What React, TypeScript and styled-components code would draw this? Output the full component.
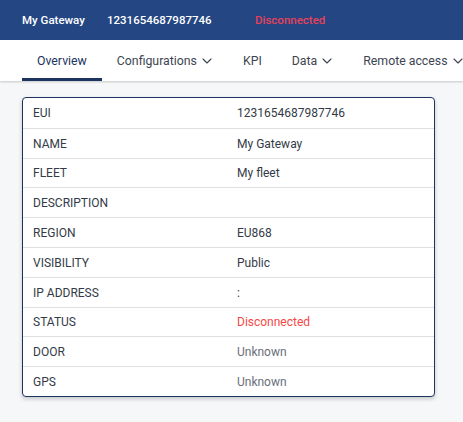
import React from 'react'
import styled, { createGlobalStyle } from 'styled-components'

const GlobalStyle = createGlobalStyle`
  body {
    margin: 0;
    background: #f6f7f9;
    font-family: Roboto, 'Noto Sans', sans-serif;
  }
`

const Header = styled.div`
  display: flex;
  align-items: center;
  height: 40px;
  padding: 0 22px;
  background: #244682;
  color: #ffffff;
  font-size: 11.5px;
  font-weight: 500;
`

const HeaderItem = styled.span<{ danger?: boolean; width?: number }>`
  color: ${({ danger }) => (danger ? '#e8405a' : '#ffffff')};
  width: ${({ width }) => (width ? `${width}px` : 'auto')};
  white-space: nowrap;
`

const TabBar = styled.div`
  display: flex;
  height: 41px;
  padding: 0 22px;
  background: #ffffff;
  box-shadow: 0 1px 2px rgba(0, 0, 0, 0.2);
  overflow: hidden;
`

const Tab = styled.div<{ active?: boolean }>`
  display: flex;
  align-items: center;
  gap: 4px;
  padding: 3px 15px 0;
  font-size: 12.3px;
  color: ${({ active }) => (active ? '#1d3461' : '#3d4451')};
  white-space: nowrap;
  border-bottom: 3px solid ${({ active }) => (active ? '#1d3461' : 'transparent')};
  box-sizing: border-box;
`

const Content = styled.div`
  padding: 16px 28px 25px 22px;
`

const Card = styled.div`
  background: #ffffff;
  border: 1px solid #1d3461;
  border-radius: 4px;
  box-shadow: 0 2px 4px rgba(0, 0, 0, 0.2);
  overflow: hidden;
`

const Row = styled.div`
  display: grid;
  grid-template-columns: 204px 1fr;
  align-items: center;
  height: 29.8px;
  box-sizing: border-box;
  padding: 1px 10px 0;
  font-size: 12px;
  color: #333b48;
  & + & {
    border-top: 1px solid #dfe0e3;
  }
`

const Value = styled.span<{ tone?: 'danger' | 'muted' }>`
  color: ${({ tone }) => (tone === 'danger' ? '#f44848' : tone === 'muted' ? '#6a707a' : '#333b48')};
`

const Chevron = () => (
  <svg width="12" height="12" viewBox="0 0 24 24" fill="none" stroke="currentColor" strokeWidth="2.2" strokeLinecap="round" strokeLinejoin="round">
    <polyline points="4 8 12 16 20 8" />
  </svg>
)

const rows: { label: string; value: string; tone?: 'danger' | 'muted' }[] = [
  { label: 'EUI', value: '1231654687987746' },
  { label: 'NAME', value: 'My Gateway' },
  { label: 'FLEET', value: 'My fleet' },
  { label: 'DESCRIPTION', value: '' },
  { label: 'REGION', value: 'EU868' },
  { label: 'VISIBILITY', value: 'Public' },
  { label: 'IP ADDRESS', value: ':' },
  { label: 'STATUS', value: 'Disconnected', tone: 'danger' },
  { label: 'DOOR', value: 'Unknown', tone: 'muted' },
  { label: 'GPS', value: 'Unknown', tone: 'muted' },
]

export default function App() {
  return (
    <>
      <GlobalStyle />
      <Header>
        <HeaderItem width={85}>My Gateway</HeaderItem>
        <HeaderItem width={148}>1231654687987746</HeaderItem>
        <HeaderItem danger>Disconnected</HeaderItem>
      </Header>
      <TabBar>
        <Tab active>Overview</Tab>
        <Tab>Configurations <Chevron /></Tab>
        <Tab>KPI</Tab>
        <Tab>Data <Chevron /></Tab>
        <Tab>Remote access <Chevron /></Tab>
      </TabBar>
      <Content>
        <Card>
          {rows.map((r) => (
            <Row key={r.label}>
              <span>{r.label}</span>
              <Value tone={r.tone}>{r.value}</Value>
            </Row>
          ))}
        </Card>
      </Content>
    </>
  )
}
